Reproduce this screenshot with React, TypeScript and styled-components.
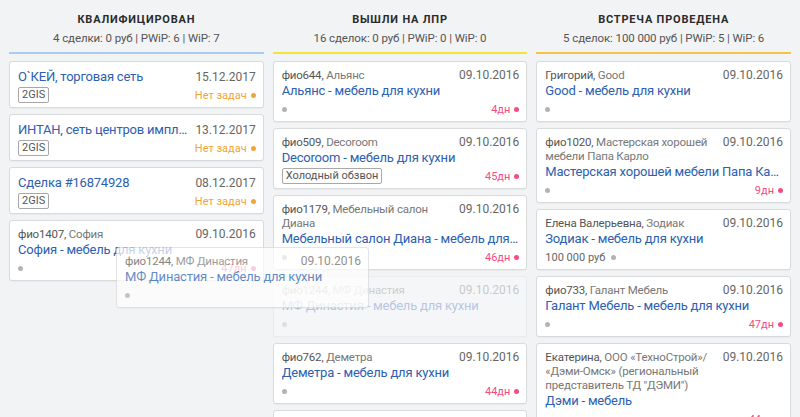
import React from 'react';
import styled, { createGlobalStyle } from 'styled-components';

const GlobalStyle = createGlobalStyle`
  html, body {
    margin: 0;
    padding: 0;
    background: #f2f3f5;
    font-family: Roboto, 'Liberation Sans', Arial, sans-serif;
  }
  * {
    box-sizing: border-box;
  }
`;

const colors = {
  BG: '#f2f3f5',
  BLUE: '#2c60b0',
  TEXT: '#2b2b2b',
  GREY: '#666666',
  DOT: '#b3b3b3',
  ORANGE: '#f2a43a',
  PINK: '#f34d84',
  BORDER: '#d9dadc',
};

type Status = { text: string; kind: 'none' | 'late' };

type Deal = {
  contact?: string;
  company?: string;
  title: string;
  date: string;
  tag?: string;
  price?: string;
  noDot?: boolean;
  status?: Status;
};

type Stage = {
  name: string;
  stats: string;
  accent: string;
  deals: Deal[];
  ghostAt?: number;
};

const ghostDeal: Deal = {
  contact: 'фио1244',
  company: 'МФ Династия',
  title: 'МФ Династия - мебель для кухни',
  date: '09.10.2016',
};

const noTasks: Status = { text: 'Нет задач', kind: 'none' };
const days = (n: number): Status => ({ text: `${n}дн`, kind: 'late' });

const stages: Stage[] = [
  {
    name: 'Квалифицирован',
    stats: '4 сделки: 0 руб | PWiP: 6 | WiP: 7',
    accent: '#a9cdf0',
    deals: [
      { title: 'О`КЕЙ, торговая сеть', date: '15.12.2017', tag: '2GIS', noDot: true, status: noTasks },
      { title: 'ИНТАН, сеть центров имплантации', date: '13.12.2017', tag: '2GIS', noDot: true, status: noTasks },
      { title: 'Сделка #16874928', date: '08.12.2017', tag: '2GIS', noDot: true, status: noTasks },
      { contact: 'фио1407', company: 'София', title: 'София - мебель для кухни', date: '09.10.2016', status: days(47) },
    ],
  },
  {
    name: 'Вышли на ЛПР',
    stats: '16 сделок: 0 руб | PWiP: 0 | WiP: 0',
    accent: '#f3e33b',
    ghostAt: 3,
    deals: [
      { contact: 'фио644', company: 'Альянс', title: 'Альянс - мебель для кухни', date: '09.10.2016', status: days(4) },
      { contact: 'фио509', company: 'Decoroom', title: 'Decoroom - мебель для кухни', date: '09.10.2016', tag: 'Холодный обзвон', noDot: true, status: days(45) },
      { contact: 'фио1179', company: 'Мебельный салон Диана', title: 'Мебельный салон Диана - мебель для кухни', date: '09.10.2016', status: days(46) },
      { contact: 'фио762', company: 'Деметра', title: 'Деметра - мебель для кухни', date: '09.10.2016', status: days(44) },
      { contact: 'фио115', company: 'Атлант', title: 'Атлант - мебель для кухни', date: '09.10.2016', status: days(44) },
    ],
  },
  {
    name: 'Встреча проведена',
    stats: '5 сделок: 100 000 руб | PWiP: 5 | WiP: 6',
    accent: '#f6c24a',
    deals: [
      { contact: 'Григорий', company: 'Good', title: 'Good - мебель для кухни', date: '09.10.2016' },
      { contact: 'фио1020', company: 'Мастерская хорошей мебели Папа Карло', title: 'Мастерская хорошей мебели Папа Карло - мебель для кухни', date: '09.10.2016', status: days(9) },
      { contact: 'Елена Валерьевна', company: 'Зодиак', title: 'Зодиак - мебель для кухни', date: '09.10.2016', price: '100 000 руб' },
      { contact: 'фио733', company: 'Галант Мебель', title: 'Галант Мебель - мебель для кухни', date: '09.10.2016', status: days(47) },
      { contact: 'Екатерина', company: 'ООО «ТехноСтрой»/ «Дэми-Омск» (региональный представитель ТД "ДЭМИ")', title: 'Дэми - мебель', date: '09.10.2016', status: days(44) },
    ],
  },
];

const Page = styled.div`
  position: relative;
  height: 417px;
  overflow: hidden;
  background: ${colors.BG};
`;

const Board = styled.div`
  display: grid;
  grid-template-columns: repeat(3, 1fr);
  gap: 9px;
  padding: 0 9px;
`;

const Column = styled.section`
  display: flex;
  flex-direction: column;
  min-width: 0;
`;

const ColumnHeader = styled.header<{ $accent: string }>`
  padding: 13px 0 6px;
  text-align: center;
  border-bottom: 2px solid ${(p) => p.$accent};
`;

const StageName = styled.div`
  font-size: 11px;
  line-height: 14px;
  font-weight: bold;
  letter-spacing: 0.8px;
  text-transform: uppercase;
  color: ${colors.TEXT};
`;

const StageStats = styled.div`
  margin-top: 3px;
  font-size: 11.5px;
  line-height: 16px;
  letter-spacing: -0.1px;
  color: #555;
`;

const CardList = styled.div`
  display: flex;
  flex-direction: column;
  gap: 6px;
  margin-top: 7px;
`;

const Card = styled.div<{ $ghost?: boolean }>`
  background: #fff;
  border: 1px solid ${colors.BORDER};
  border-radius: 3px;
  box-shadow: 0 1px 1px rgba(0, 0, 0, 0.04);
  padding: 6px 7px 4px 8px;
  opacity: ${(p) => (p.$ghost ? 0.3 : 1)};
`;

const DraggedCard = styled(Card)`
  position: absolute;
  left: 116px;
  top: 247px;
  width: 253px;
  opacity: 0.72;
  pointer-events: none;
`;

const TopRow = styled.div`
  display: flex;
  align-items: flex-start;
  justify-content: space-between;
  gap: 8px;
`;

const Meta = styled.div`
  flex: 1;
  min-width: 0;
  font-size: 11.5px;
  line-height: 14px;
  letter-spacing: -0.2px;
  color: #777;
`;

const Contact = styled.span`
  color: #555;
`;

const DateText = styled.div<{ $center?: boolean }>`
  flex: none;
  font-size: 12px;
  line-height: ${(p) => (p.$center ? '18px' : '14px')};
  color: ${colors.GREY};
`;

const Title = styled.div`
  flex: 1;
  min-width: 0;
  font-size: 13px;
  line-height: 18px;
  letter-spacing: -0.2px;
  color: ${colors.BLUE};
  white-space: nowrap;
  overflow: hidden;
  text-overflow: ellipsis;
`;

const Footer = styled.div`
  display: flex;
  align-items: center;
  justify-content: space-between;
  min-height: 16px;
  margin-top: 1px;
`;

const FooterLeft = styled.div`
  display: flex;
  align-items: center;
  gap: 6px;
  font-size: 11px;
  color: ${colors.GREY};
`;

const Tag = styled.span`
  display: inline-block;
  border: 1px solid #a8a8a8;
  border-radius: 2px;
  padding: 0 3px;
  font-size: 11px;
  line-height: 14px;
  color: #555;
`;

const Dot = styled.span<{ $color?: string }>`
  display: inline-block;
  width: 5px;
  height: 5px;
  border-radius: 50%;
  background: ${(p) => p.$color || colors.DOT};
`;

const StatusText = styled.div<{ $color: string }>`
  display: flex;
  align-items: center;
  gap: 4px;
  font-size: 11px;
  color: ${(p) => p.$color};
`;

const DealCard: React.FC<{ deal: Deal; ghost?: boolean; as?: typeof Card }> = ({
  deal,
  ghost,
  as: Wrapper = Card,
}) => {
  const statusColor = deal.status?.kind === 'none' ? colors.ORANGE : colors.PINK;
  return (
    <Wrapper $ghost={ghost}>
      {deal.contact ? (
        <>
          <TopRow>
            <Meta>
              <Contact>{deal.contact},</Contact> {deal.company}
            </Meta>
            <DateText>{deal.date}</DateText>
          </TopRow>
          <Title>{deal.title}</Title>
        </>
      ) : (
        <TopRow>
          <Title>{deal.title}</Title>
          <DateText $center>{deal.date}</DateText>
        </TopRow>
      )}
      <Footer>
        <FooterLeft>
          {deal.tag && <Tag>{deal.tag}</Tag>}
          {deal.price && <span>{deal.price}</span>}
          {!deal.noDot && <Dot />}
        </FooterLeft>
        {deal.status && (
          <StatusText $color={statusColor}>
            {deal.status.text}
            <Dot $color={statusColor} />
          </StatusText>
        )}
      </Footer>
    </Wrapper>
  );
};

const App: React.FC = () => {
  return (
    <Page>
      <GlobalStyle />
      <Board>
        {stages.map((stage) => (
          <Column key={stage.name}>
            <ColumnHeader $accent={stage.accent}>
              <StageName>{stage.name}</StageName>
              <StageStats>{stage.stats}</StageStats>
            </ColumnHeader>
            <CardList>
              {stage.deals.map((deal, i) => (
                <React.Fragment key={deal.title}>
                  {stage.ghostAt === i && <DealCard deal={ghostDeal} ghost />}
                  <DealCard deal={deal} />
                </React.Fragment>
              ))}
            </CardList>
          </Column>
        ))}
      </Board>
      <DealCard deal={ghostDeal} as={DraggedCard} />
    </Page>
  );
};

export default App;
